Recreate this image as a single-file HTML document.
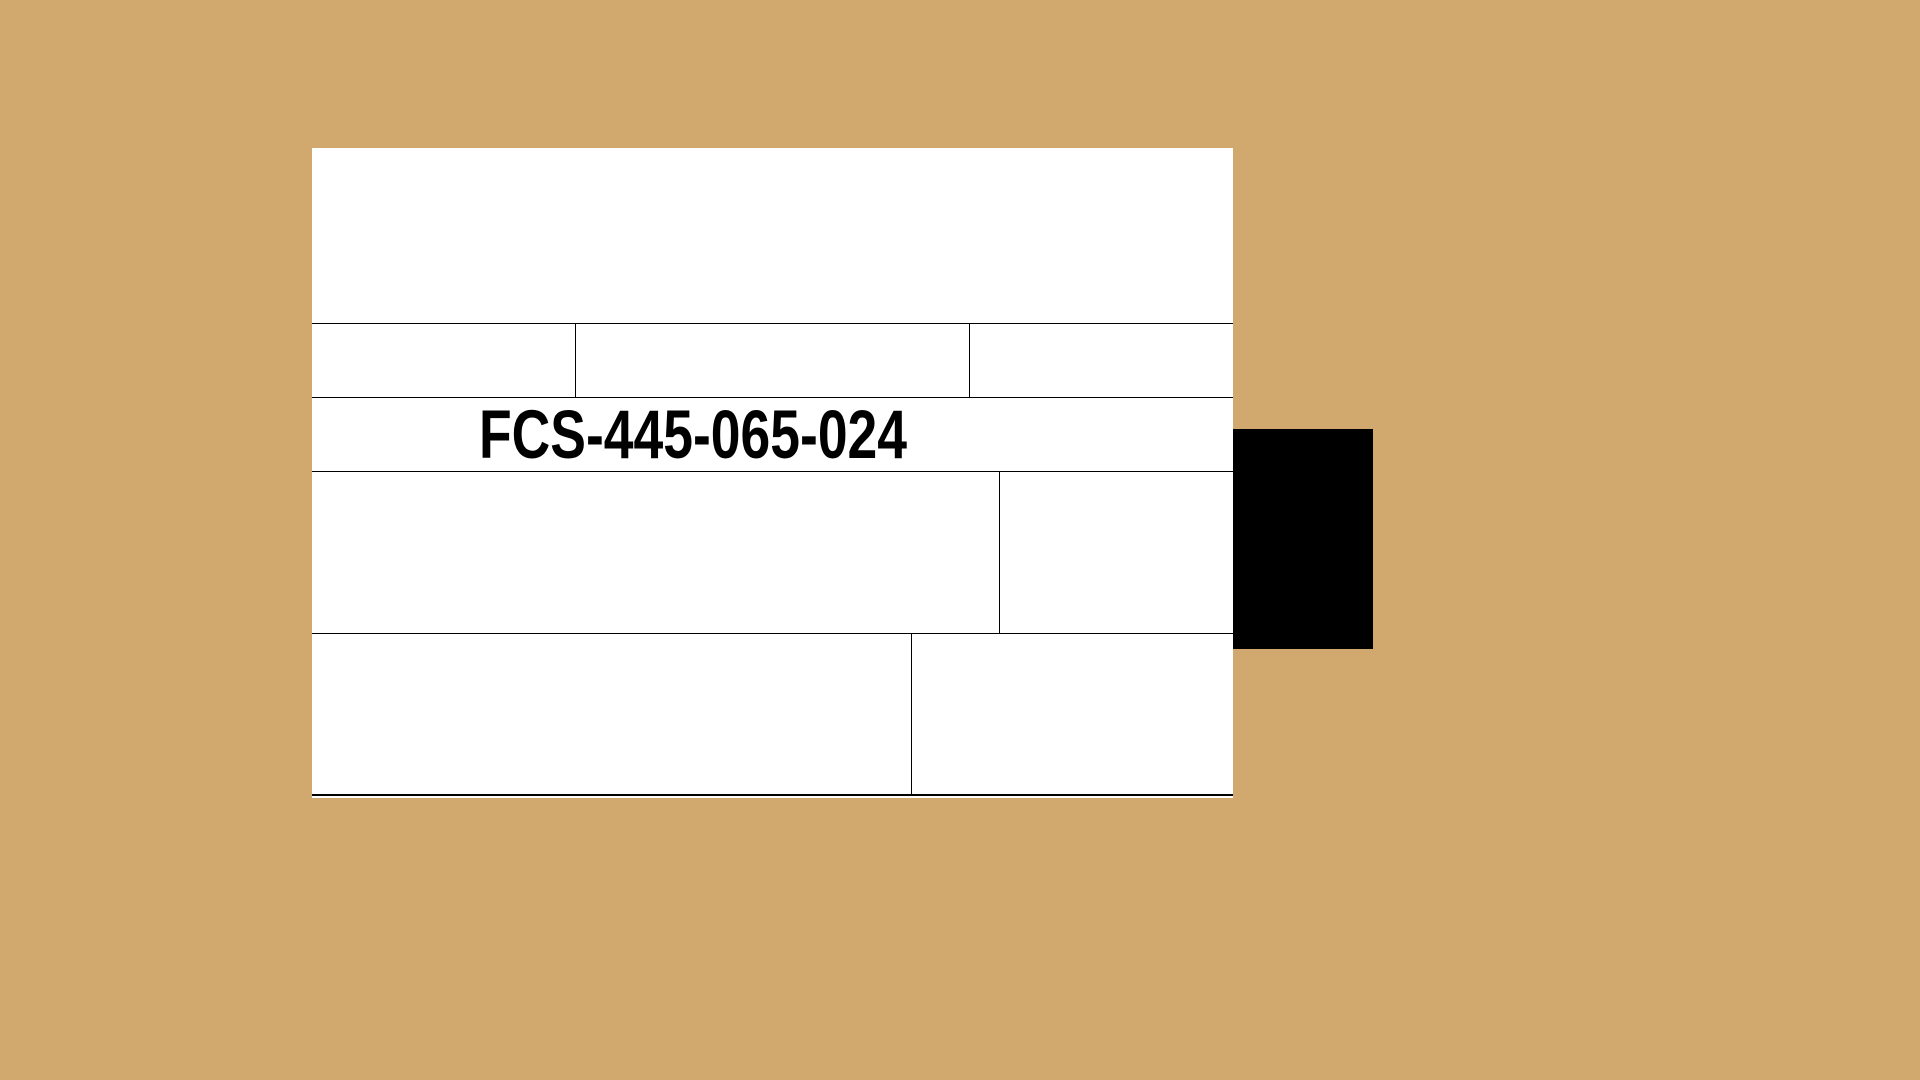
<!DOCTYPE html>
<html><head><style>
html,body{margin:0;padding:0;}
body{width:1920px;height:1080px;background:#d1a86e;position:relative;overflow:hidden;font-family:"Liberation Sans",sans-serif;}
.w{position:absolute;left:312px;top:148px;width:921px;height:650px;background:#fff;}
.h{position:absolute;left:312px;width:921px;height:1px;background:#000;}
.v{position:absolute;width:1px;background:#000;}
.t{position:absolute;left:479px;top:396px;font-size:69px;font-weight:bold;line-height:78px;transform:scaleX(0.775);transform-origin:0 0;white-space:nowrap;color:#000;}
</style></head><body>
<div class="w"></div>
<div class="h" style="top:323px"></div>
<div class="h" style="top:397px"></div>
<div class="h" style="top:471px"></div>
<div class="h" style="top:633px"></div>
<div class="h" style="top:794px;height:2px"></div>
<div class="v" style="left:575px;top:323px;height:74px"></div>
<div class="v" style="left:969px;top:323px;height:74px"></div>
<div class="v" style="left:999px;top:471px;height:162px"></div>
<div class="v" style="left:911px;top:633px;height:162px"></div>
<div class="t">FCS-445-065-024</div>
<div style="position:absolute;left:1233px;top:429px;width:140px;height:220px;background:#000"></div>
</body></html>
